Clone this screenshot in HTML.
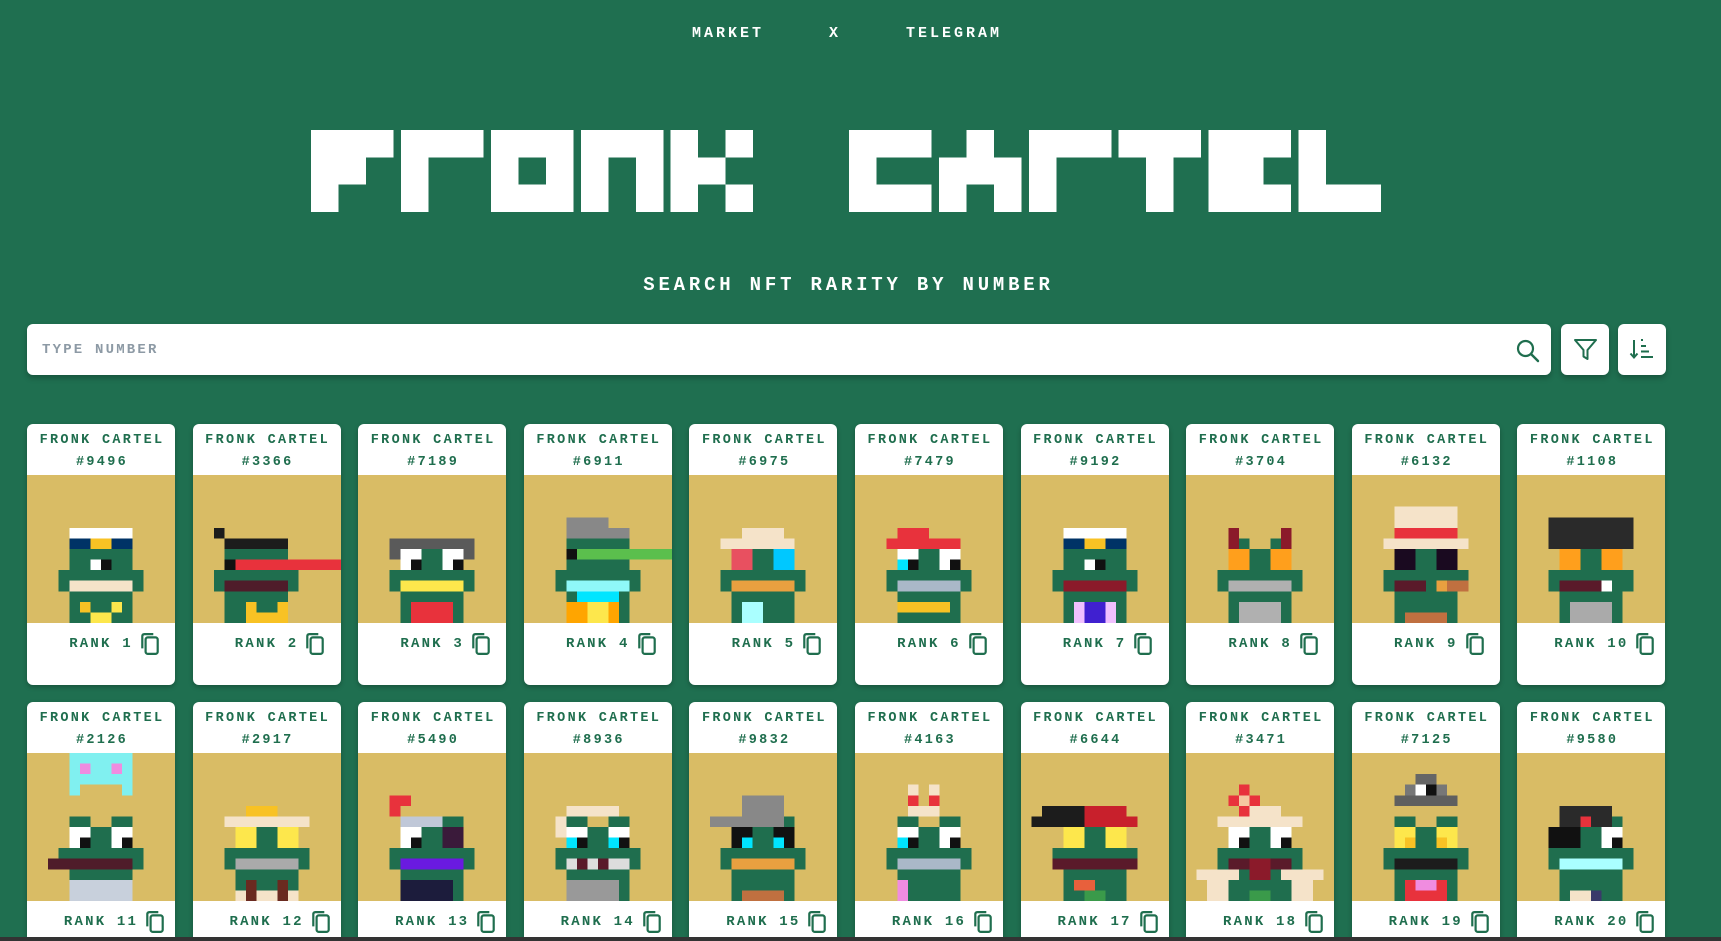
<!DOCTYPE html>
<html><head><meta charset="utf-8">
<style>
*{box-sizing:border-box;margin:0;padding:0}
html{width:1721px;height:941px;overflow:hidden}
body{width:1721px;height:941px;overflow:hidden;background:#1f6f50;font-family:"Liberation Mono","DejaVu Sans Mono",monospace;font-weight:bold;position:relative}
.nav{position:absolute;top:25px;left:0;width:1721px;height:20px;color:#fff;font-size:15px;letter-spacing:3px}
.nav span{position:absolute;top:0}
.title{position:absolute;left:0;top:0}
.sub{position:absolute;top:274px;left:0;width:1721px;text-align:center;color:#fff;font-size:19px;letter-spacing:3.8px;padding-right:24px}
.search{position:absolute;left:27px;top:324px;width:1524px;height:51px;background:#fff;border-radius:6px;box-shadow:0 3px 6px rgba(0,0,0,.25)}
.search .ph{position:absolute;left:15px;top:18px;font-size:14px;letter-spacing:2.2px;color:#8d9aa5;font-weight:bold}
.btn{position:absolute;top:324px;width:48px;height:51px;background:#fff;border-radius:6px;box-shadow:0 3px 6px rgba(0,0,0,.25)}
.grid{position:absolute;left:27px;top:424px;display:grid;grid-template-columns:repeat(10,148px);column-gap:17.6px;row-gap:17px}
.card{width:148px;height:261px;background:#fff;border-radius:6px;overflow:hidden;box-shadow:0 2px 5px rgba(0,0,0,.25);color:#1f6e4e}
.hd{height:51px;text-align:center;font-size:13.5px;letter-spacing:2.3px;line-height:22px;padding-top:6px;padding-left:2px}
.img{height:148px;background:#d9bc65;display:block}
.img svg{display:block}
.rk{height:40px;display:flex;align-items:center;justify-content:center;padding-left:26px;font-size:14px;letter-spacing:2.2px;padding-top:2px}
.rk svg{margin-left:8px;width:18px;height:22px}
.bar{position:absolute;left:0;top:937px;width:1721px;height:4px;background:#333}
</style></head><body>
<svg width="0" height="0" style="position:absolute">
<defs>
<g id="f">
<rect x="4" y="6" width="2" height="1" fill="#1f6e4e"/><rect x="8" y="6" width="2" height="1" fill="#1f6e4e"/>
<rect x="6" y="7" width="2" height="2" fill="#1f6e4e"/>
<rect x="4" y="7" width="2" height="2" fill="#fff"/><rect x="8" y="7" width="2" height="2" fill="#fff"/>
<rect x="5" y="8" width="1" height="1" fill="#111"/><rect x="9" y="8" width="1" height="1" fill="#111"/>
<rect x="3" y="9" width="8" height="2" fill="#1f6e4e"/>
<rect x="4" y="11" width="6" height="3" fill="#1f6e4e"/>
</g>
</defs></svg>

<div class="nav"><span style="left:692px">MARKET</span><span style="left:829px">X</span><span style="left:906px">TELEGRAM</span></div>

<svg class="title" width="1721" height="240" shape-rendering="crispEdges">
<g fill="#fff" transform="translate(311,130) scale(27.5,27.3)">
<g><rect x="0" y="0" width="3" height="1"/><rect x="0" y="1" width="2" height="1"/><rect x="0" y="2" width="1" height="1"/></g>
<g transform="translate(3.27,0)"><rect x="0" y="0" width="3" height="1"/><rect x="0" y="1" width="1" height="2"/></g>
<g transform="translate(6.54,0)"><rect x="0" y="0" width="3" height="1"/><rect x="0" y="2" width="3" height="1"/><rect x="0" y="1" width="1" height="1"/><rect x="2" y="1" width="1" height="1"/></g>
<g transform="translate(9.81,0)"><rect x="0" y="0" width="3" height="1"/><rect x="0" y="1" width="1" height="2"/><rect x="2" y="1" width="1" height="2"/></g>
<g transform="translate(13.08,0)"><rect x="0" y="0" width="1" height="3"/><rect x="1" y="1" width="1" height="1"/><rect x="2" y="0" width="1" height="1"/><rect x="2" y="2" width="1" height="1"/></g>
<g transform="translate(19.56,0)"><rect x="0" y="0" width="3" height="1"/><rect x="0" y="2" width="3" height="1"/><rect x="0" y="1" width="1" height="1"/></g>
<g transform="translate(22.83,0)"><rect x="1" y="0" width="1" height="1"/><rect x="0" y="1" width="3" height="1"/><rect x="0" y="2" width="1" height="1"/><rect x="2" y="2" width="1" height="1"/></g>
<g transform="translate(26.1,0)"><rect x="0" y="0" width="3" height="1"/><rect x="0" y="1" width="1" height="2"/></g>
<g transform="translate(29.37,0)"><rect x="0" y="0" width="3" height="1"/><rect x="1" y="1" width="1" height="2"/></g>
<g transform="translate(32.64,0)"><rect x="0" y="0" width="3" height="1"/><rect x="0" y="1" width="2" height="1"/><rect x="0" y="2" width="3" height="1"/></g>
<g transform="translate(35.91,0)"><rect x="0" y="0" width="1" height="2"/><rect x="0" y="2" width="3" height="1"/></g>
</g></svg>

<div class="sub">SEARCH NFT RARITY BY NUMBER</div>

<div class="search"><div class="ph">TYPE NUMBER</div>
<svg style="position:absolute;left:1488px;top:14px" width="26" height="26" viewBox="0 0 26 26"><circle cx="10.5" cy="10.5" r="7.5" fill="none" stroke="#1f6e4e" stroke-width="2.2"/><path d="M16 16 L23 23" stroke="#1f6e4e" stroke-width="2.4" stroke-linecap="round"/></svg>
</div>
<div class="btn" style="left:1561px"><svg style="position:absolute;left:12px;top:13px" width="25" height="25" viewBox="0 0 25 25"><path d="M2 3 H23 L14.5 13 V22 L10.5 19.5 V13 Z" fill="none" stroke="#1f6e4e" stroke-width="2" stroke-linejoin="round"/></svg></div>
<div class="btn" style="left:1618px"><svg style="position:absolute;left:11px;top:13px" width="26" height="26" viewBox="0 0 26 26"><path d="M5 3 V20 M1.5 16.5 L5 20.5 L8.5 16.5" fill="none" stroke="#1f6e4e" stroke-width="2"/><path d="M12 3 H14 M12 9 H17 M12 14.5 H20 M12 20 H24" stroke="#1f6e4e" stroke-width="2"/></svg></div>

<div class="grid">
<div class="card"><div class="hd">FRONK CARTEL<br>#9496</div><div class="img"><svg width="148" height="148" viewBox="0 0 14 14" preserveAspectRatio="none" shape-rendering="crispEdges"><use href="#f"/><rect x="4" y="5" width="6" height="1" fill="#fff"/><rect x="4" y="6" width="6" height="1" fill="#003366"/><rect x="6" y="6" width="2" height="1" fill="#f8c224"/><rect x="4" y="7" width="6" height="2" fill="#1f6e4e"/><rect x="6" y="8" width="1" height="1" fill="#fff"/><rect x="7" y="8" width="1" height="1" fill="#111"/><rect x="4" y="10" width="6" height="1" fill="#f5e3c9"/><rect x="5" y="12" width="1" height="1" fill="#f8c224"/><rect x="8" y="12" width="1" height="1" fill="#fde74c"/><rect x="6" y="13" width="2" height="1" fill="#fde74c"/></svg></div><div class="rk">RANK 1<svg viewBox="0 0 16 20"><path d="M1 14 V3 Q1 1 3 1 H11" fill="none" stroke="#1f6e4e" stroke-width="2"/><rect x="4" y="4" width="11" height="15" rx="2" fill="none" stroke="#1f6e4e" stroke-width="2"/></svg></div></div>

<div class="card"><div class="hd">FRONK CARTEL<br>#3366</div><div class="img"><svg width="148" height="148" viewBox="0 0 14 14" preserveAspectRatio="none" shape-rendering="crispEdges"><use href="#f" x="-1"/><rect x="2" y="5" width="1" height="1" fill="#1c1c1c"/><rect x="3" y="6" width="6" height="1" fill="#1c1c1c"/><rect x="3" y="7" width="6" height="1" fill="#1f6e4e"/><rect x="3" y="8" width="1" height="1" fill="#111"/><rect x="4" y="8" width="10" height="1" fill="#e8323c"/><rect x="3" y="10" width="6" height="1" fill="#4f1c2a"/><rect x="5" y="12" width="4" height="2" fill="#f8c224"/><rect x="6" y="12" width="2" height="1" fill="#1f6e4e"/></svg></div><div class="rk">RANK 2<svg viewBox="0 0 16 20"><path d="M1 14 V3 Q1 1 3 1 H11" fill="none" stroke="#1f6e4e" stroke-width="2"/><rect x="4" y="4" width="11" height="15" rx="2" fill="none" stroke="#1f6e4e" stroke-width="2"/></svg></div></div>

<div class="card"><div class="hd">FRONK CARTEL<br>#7189</div><div class="img"><svg width="148" height="148" viewBox="0 0 14 14" preserveAspectRatio="none" shape-rendering="crispEdges"><use href="#f"/><rect x="4" y="6" width="6" height="1" fill="#5a5a5a"/><rect x="3" y="6" width="1" height="2" fill="#5a5a5a"/><rect x="10" y="6" width="1" height="2" fill="#5a5a5a"/><rect x="4" y="10" width="6" height="1" fill="#fde74c"/><rect x="5" y="12" width="4" height="2" fill="#e8323c"/></svg></div><div class="rk">RANK 3<svg viewBox="0 0 16 20"><path d="M1 14 V3 Q1 1 3 1 H11" fill="none" stroke="#1f6e4e" stroke-width="2"/><rect x="4" y="4" width="11" height="15" rx="2" fill="none" stroke="#1f6e4e" stroke-width="2"/></svg></div></div>

<div class="card"><div class="hd">FRONK CARTEL<br>#6911</div><div class="img"><svg width="148" height="148" viewBox="0 0 14 14" preserveAspectRatio="none" shape-rendering="crispEdges"><use href="#f"/><rect x="4" y="4" width="4" height="2" fill="#888"/><rect x="8" y="5" width="2" height="1" fill="#888"/><rect x="4" y="6" width="6" height="1" fill="#1f6e4e"/><rect x="4" y="7" width="1" height="1" fill="#111"/><rect x="5" y="7" width="9" height="1" fill="#5bbf4d"/><rect x="4" y="8" width="6" height="1" fill="#1f6e4e"/><rect x="3" y="9" width="8" height="1" fill="#1f6e4e"/><rect x="4" y="10" width="6" height="1" fill="#8ff8f8"/><rect x="5" y="11" width="4" height="1" fill="#00e5ff"/><rect x="4" y="12" width="5" height="2" fill="#ffa500"/><rect x="6" y="12" width="2" height="2" fill="#fde74c"/></svg></div><div class="rk">RANK 4<svg viewBox="0 0 16 20"><path d="M1 14 V3 Q1 1 3 1 H11" fill="none" stroke="#1f6e4e" stroke-width="2"/><rect x="4" y="4" width="11" height="15" rx="2" fill="none" stroke="#1f6e4e" stroke-width="2"/></svg></div></div>

<div class="card"><div class="hd">FRONK CARTEL<br>#6975</div><div class="img"><svg width="148" height="148" viewBox="0 0 14 14" preserveAspectRatio="none" shape-rendering="crispEdges"><use href="#f"/><rect x="5" y="5" width="4" height="1" fill="#f5e3c9"/><rect x="3" y="6" width="7" height="1" fill="#f5e3c9"/><rect x="4" y="7" width="2" height="2" fill="#e85060"/><rect x="8" y="7" width="2" height="2" fill="#00c8ff"/><rect x="4" y="10" width="6" height="1" fill="#e8a040"/><rect x="5" y="12" width="2" height="2" fill="#aaffff"/></svg></div><div class="rk">RANK 5<svg viewBox="0 0 16 20"><path d="M1 14 V3 Q1 1 3 1 H11" fill="none" stroke="#1f6e4e" stroke-width="2"/><rect x="4" y="4" width="11" height="15" rx="2" fill="none" stroke="#1f6e4e" stroke-width="2"/></svg></div></div>

<div class="card"><div class="hd">FRONK CARTEL<br>#7479</div><div class="img"><svg width="148" height="148" viewBox="0 0 14 14" preserveAspectRatio="none" shape-rendering="crispEdges"><use href="#f"/><rect x="4" y="5" width="3" height="1" fill="#e8323c"/><rect x="3" y="6" width="7" height="1" fill="#e8323c"/><rect x="4" y="8" width="1" height="1" fill="#00e5ff"/><rect x="4" y="10" width="6" height="1" fill="#aab8c8"/><rect x="4" y="12" width="5" height="1" fill="#f8c224"/></svg></div><div class="rk">RANK 6<svg viewBox="0 0 16 20"><path d="M1 14 V3 Q1 1 3 1 H11" fill="none" stroke="#1f6e4e" stroke-width="2"/><rect x="4" y="4" width="11" height="15" rx="2" fill="none" stroke="#1f6e4e" stroke-width="2"/></svg></div></div>

<div class="card"><div class="hd">FRONK CARTEL<br>#9192</div><div class="img"><svg width="148" height="148" viewBox="0 0 14 14" preserveAspectRatio="none" shape-rendering="crispEdges"><use href="#f"/><rect x="4" y="5" width="6" height="1" fill="#fff"/><rect x="4" y="6" width="6" height="1" fill="#003366"/><rect x="6" y="6" width="2" height="1" fill="#f8c224"/><rect x="4" y="7" width="6" height="2" fill="#1f6e4e"/><rect x="6" y="8" width="1" height="1" fill="#fff"/><rect x="7" y="8" width="1" height="1" fill="#111"/><rect x="4" y="10" width="6" height="1" fill="#8b1a2a"/><rect x="5" y="12" width="1" height="2" fill="#f0c0ff"/><rect x="6" y="12" width="2" height="2" fill="#4020d0"/><rect x="8" y="12" width="1" height="2" fill="#f0c0ff"/></svg></div><div class="rk">RANK 7<svg viewBox="0 0 16 20"><path d="M1 14 V3 Q1 1 3 1 H11" fill="none" stroke="#1f6e4e" stroke-width="2"/><rect x="4" y="4" width="11" height="15" rx="2" fill="none" stroke="#1f6e4e" stroke-width="2"/></svg></div></div>

<div class="card"><div class="hd">FRONK CARTEL<br>#3704</div><div class="img"><svg width="148" height="148" viewBox="0 0 14 14" preserveAspectRatio="none" shape-rendering="crispEdges"><use href="#f"/><rect x="4" y="5" width="1" height="2" fill="#8b1a2a"/><rect x="9" y="5" width="1" height="2" fill="#8b1a2a"/><rect x="4" y="7" width="2" height="2" fill="#ff9f1c"/><rect x="8" y="7" width="2" height="2" fill="#ff9f1c"/><rect x="4" y="10" width="6" height="1" fill="#b0b0b0"/><rect x="5" y="12" width="4" height="2" fill="#b0b0b0"/></svg></div><div class="rk">RANK 8<svg viewBox="0 0 16 20"><path d="M1 14 V3 Q1 1 3 1 H11" fill="none" stroke="#1f6e4e" stroke-width="2"/><rect x="4" y="4" width="11" height="15" rx="2" fill="none" stroke="#1f6e4e" stroke-width="2"/></svg></div></div>

<div class="card"><div class="hd">FRONK CARTEL<br>#6132</div><div class="img"><svg width="148" height="148" viewBox="0 0 14 14" preserveAspectRatio="none" shape-rendering="crispEdges"><use href="#f"/><rect x="4" y="3" width="6" height="2" fill="#f5e3c9"/><rect x="4" y="5" width="6" height="1" fill="#e8323c"/><rect x="3" y="6" width="8" height="1" fill="#f5e3c9"/><rect x="4" y="7" width="2" height="2" fill="#1a0a20"/><rect x="8" y="7" width="2" height="2" fill="#1a0a20"/><rect x="4" y="10" width="3" height="1" fill="#5a1a2a"/><rect x="8" y="10" width="1" height="1" fill="#e8a040"/><rect x="9" y="10" width="2" height="1" fill="#c07040"/><rect x="5" y="13" width="4" height="1" fill="#c07040"/></svg></div><div class="rk">RANK 9<svg viewBox="0 0 16 20"><path d="M1 14 V3 Q1 1 3 1 H11" fill="none" stroke="#1f6e4e" stroke-width="2"/><rect x="4" y="4" width="11" height="15" rx="2" fill="none" stroke="#1f6e4e" stroke-width="2"/></svg></div></div>

<div class="card"><div class="hd">FRONK CARTEL<br>#1108</div><div class="img"><svg width="148" height="148" viewBox="0 0 14 14" preserveAspectRatio="none" shape-rendering="crispEdges"><use href="#f"/><rect x="3" y="4" width="8" height="3" fill="#2a2a2a"/><rect x="4" y="7" width="2" height="2" fill="#ff9f1c"/><rect x="8" y="7" width="2" height="2" fill="#ff9f1c"/><rect x="4" y="10" width="4" height="1" fill="#5a1a2a"/><rect x="8" y="10" width="1" height="1" fill="#fff"/><rect x="5" y="12" width="4" height="2" fill="#aaa"/></svg></div><div class="rk">RANK 10<svg viewBox="0 0 16 20"><path d="M1 14 V3 Q1 1 3 1 H11" fill="none" stroke="#1f6e4e" stroke-width="2"/><rect x="4" y="4" width="11" height="15" rx="2" fill="none" stroke="#1f6e4e" stroke-width="2"/></svg></div></div>

<div class="card"><div class="hd">FRONK CARTEL<br>#2126</div><div class="img"><svg width="148" height="148" viewBox="0 0 14 14" preserveAspectRatio="none" shape-rendering="crispEdges"><use href="#f"/><rect x="4" y="0" width="6" height="3" fill="#80f0f0"/><rect x="5" y="1" width="1" height="1" fill="#f08ce0"/><rect x="8" y="1" width="1" height="1" fill="#f08ce0"/><rect x="4" y="3" width="1" height="1" fill="#80f0f0"/><rect x="9" y="3" width="1" height="1" fill="#80f0f0"/><rect x="2" y="10" width="8" height="1" fill="#4f1c2a"/><rect x="4" y="12" width="6" height="2" fill="#c8d0dc"/></svg></div><div class="rk">RANK 11<svg viewBox="0 0 16 20"><path d="M1 14 V3 Q1 1 3 1 H11" fill="none" stroke="#1f6e4e" stroke-width="2"/><rect x="4" y="4" width="11" height="15" rx="2" fill="none" stroke="#1f6e4e" stroke-width="2"/></svg></div></div>

<div class="card"><div class="hd">FRONK CARTEL<br>#2917</div><div class="img"><svg width="148" height="148" viewBox="0 0 14 14" preserveAspectRatio="none" shape-rendering="crispEdges"><use href="#f"/><rect x="5" y="5" width="3" height="1" fill="#f8c224"/><rect x="3" y="6" width="8" height="1" fill="#f5e3c9"/><rect x="4" y="7" width="2" height="2" fill="#fde74c"/><rect x="8" y="7" width="2" height="2" fill="#fde74c"/><rect x="4" y="10" width="6" height="1" fill="#aaa"/><rect x="4" y="13" width="6" height="1" fill="#f5e3c9"/><rect x="5" y="12" width="1" height="2" fill="#6a2a20"/><rect x="8" y="12" width="1" height="2" fill="#6a2a20"/></svg></div><div class="rk">RANK 12<svg viewBox="0 0 16 20"><path d="M1 14 V3 Q1 1 3 1 H11" fill="none" stroke="#1f6e4e" stroke-width="2"/><rect x="4" y="4" width="11" height="15" rx="2" fill="none" stroke="#1f6e4e" stroke-width="2"/></svg></div></div>

<div class="card"><div class="hd">FRONK CARTEL<br>#5490</div><div class="img"><svg width="148" height="148" viewBox="0 0 14 14" preserveAspectRatio="none" shape-rendering="crispEdges"><use href="#f"/><rect x="3" y="4" width="2" height="1" fill="#e8323c"/><rect x="3" y="5" width="1" height="1" fill="#e8323c"/><rect x="4" y="6" width="4" height="1" fill="#c0c8d8"/><rect x="8" y="7" width="2" height="2" fill="#3a1a3a"/><rect x="4" y="10" width="6" height="1" fill="#6a1ae0"/><rect x="4" y="12" width="5" height="2" fill="#1c1c3c"/></svg></div><div class="rk">RANK 13<svg viewBox="0 0 16 20"><path d="M1 14 V3 Q1 1 3 1 H11" fill="none" stroke="#1f6e4e" stroke-width="2"/><rect x="4" y="4" width="11" height="15" rx="2" fill="none" stroke="#1f6e4e" stroke-width="2"/></svg></div></div>

<div class="card"><div class="hd">FRONK CARTEL<br>#8936</div><div class="img"><svg width="148" height="148" viewBox="0 0 14 14" preserveAspectRatio="none" shape-rendering="crispEdges"><use href="#f"/><rect x="4" y="5" width="5" height="1" fill="#f5e3c9"/><rect x="3" y="6" width="1" height="2" fill="#f5e3c9"/><rect x="4" y="8" width="1" height="1" fill="#00e5ff"/><rect x="8" y="8" width="1" height="1" fill="#00e5ff"/><rect x="4" y="10" width="6" height="1" fill="#ddd"/><rect x="5" y="10" width="1" height="1" fill="#5a1a2a"/><rect x="7" y="10" width="1" height="1" fill="#5a1a2a"/><rect x="4" y="12" width="5" height="2" fill="#999"/></svg></div><div class="rk">RANK 14<svg viewBox="0 0 16 20"><path d="M1 14 V3 Q1 1 3 1 H11" fill="none" stroke="#1f6e4e" stroke-width="2"/><rect x="4" y="4" width="11" height="15" rx="2" fill="none" stroke="#1f6e4e" stroke-width="2"/></svg></div></div>

<div class="card"><div class="hd">FRONK CARTEL<br>#9832</div><div class="img"><svg width="148" height="148" viewBox="0 0 14 14" preserveAspectRatio="none" shape-rendering="crispEdges"><use href="#f"/><rect x="5" y="4" width="4" height="3" fill="#888"/><rect x="2" y="6" width="3" height="1" fill="#888"/><rect x="4" y="7" width="2" height="2" fill="#111"/><rect x="8" y="7" width="2" height="2" fill="#111"/><rect x="5" y="8" width="1" height="1" fill="#00e5ff"/><rect x="8" y="8" width="1" height="1" fill="#00e5ff"/><rect x="4" y="10" width="6" height="1" fill="#e8a040"/><rect x="5" y="13" width="4" height="1" fill="#c07040"/></svg></div><div class="rk">RANK 15<svg viewBox="0 0 16 20"><path d="M1 14 V3 Q1 1 3 1 H11" fill="none" stroke="#1f6e4e" stroke-width="2"/><rect x="4" y="4" width="11" height="15" rx="2" fill="none" stroke="#1f6e4e" stroke-width="2"/></svg></div></div>

<div class="card"><div class="hd">FRONK CARTEL<br>#4163</div><div class="img"><svg width="148" height="148" viewBox="0 0 14 14" preserveAspectRatio="none" shape-rendering="crispEdges"><use href="#f"/><rect x="5" y="3" width="1" height="2" fill="#f5e3c9"/><rect x="7" y="3" width="1" height="2" fill="#f5e3c9"/><rect x="5" y="4" width="1" height="1" fill="#e8323c"/><rect x="7" y="4" width="1" height="1" fill="#e8323c"/><rect x="5" y="5" width="3" height="1" fill="#f5e3c9"/><rect x="4" y="8" width="1" height="1" fill="#00e5ff"/><rect x="4" y="10" width="6" height="1" fill="#aab8c8"/><rect x="4" y="12" width="1" height="2" fill="#f08ce0"/></svg></div><div class="rk">RANK 16<svg viewBox="0 0 16 20"><path d="M1 14 V3 Q1 1 3 1 H11" fill="none" stroke="#1f6e4e" stroke-width="2"/><rect x="4" y="4" width="11" height="15" rx="2" fill="none" stroke="#1f6e4e" stroke-width="2"/></svg></div></div>

<div class="card"><div class="hd">FRONK CARTEL<br>#6644</div><div class="img"><svg width="148" height="148" viewBox="0 0 14 14" preserveAspectRatio="none" shape-rendering="crispEdges"><use href="#f"/><rect x="2" y="5" width="4" height="2" fill="#1c1c1c"/><rect x="6" y="5" width="4" height="2" fill="#c8202c"/><rect x="1" y="6" width="1" height="1" fill="#1c1c1c"/><rect x="10" y="6" width="1" height="1" fill="#c8202c"/><rect x="4" y="7" width="2" height="2" fill="#fde74c"/><rect x="8" y="7" width="2" height="2" fill="#fde74c"/><rect x="3" y="10" width="8" height="1" fill="#5a1a2a"/><rect x="5" y="12" width="2" height="1" fill="#e8603c"/><rect x="6" y="13" width="2" height="1" fill="#3a9a4a"/></svg></div><div class="rk">RANK 17<svg viewBox="0 0 16 20"><path d="M1 14 V3 Q1 1 3 1 H11" fill="none" stroke="#1f6e4e" stroke-width="2"/><rect x="4" y="4" width="11" height="15" rx="2" fill="none" stroke="#1f6e4e" stroke-width="2"/></svg></div></div>

<div class="card"><div class="hd">FRONK CARTEL<br>#3471</div><div class="img"><svg width="148" height="148" viewBox="0 0 14 14" preserveAspectRatio="none" shape-rendering="crispEdges"><use href="#f"/><rect x="5" y="3" width="1" height="1" fill="#e8323c"/><rect x="4" y="4" width="3" height="1" fill="#e8323c"/><rect x="5" y="4" width="1" height="1" fill="#f5c8a0"/><rect x="5" y="5" width="1" height="1" fill="#e8323c"/><rect x="6" y="5" width="3" height="1" fill="#f5e3c9"/><rect x="3" y="6" width="8" height="1" fill="#f5e3c9"/><rect x="4" y="10" width="6" height="1" fill="#5a1a2a"/><rect x="6" y="10" width="2" height="2" fill="#8b1a2a"/><rect x="1" y="11" width="4" height="1" fill="#f5e3c9"/><rect x="9" y="11" width="4" height="1" fill="#f5e3c9"/><rect x="2" y="12" width="2" height="2" fill="#f5e3c9"/><rect x="10" y="12" width="2" height="2" fill="#f5e3c9"/><rect x="6" y="13" width="2" height="1" fill="#3a9a4a"/></svg></div><div class="rk">RANK 18<svg viewBox="0 0 16 20"><path d="M1 14 V3 Q1 1 3 1 H11" fill="none" stroke="#1f6e4e" stroke-width="2"/><rect x="4" y="4" width="11" height="15" rx="2" fill="none" stroke="#1f6e4e" stroke-width="2"/></svg></div></div>

<div class="card"><div class="hd">FRONK CARTEL<br>#7125</div><div class="img"><svg width="148" height="148" viewBox="0 0 14 14" preserveAspectRatio="none" shape-rendering="crispEdges"><use href="#f"/><rect x="6" y="2" width="2" height="1" fill="#666"/><rect x="5" y="3" width="4" height="1" fill="#777"/><rect x="6" y="3" width="1" height="1" fill="#fff"/><rect x="7" y="3" width="1" height="1" fill="#111"/><rect x="4" y="4" width="6" height="1" fill="#5f5f5f"/><rect x="4" y="7" width="2" height="2" fill="#fde74c"/><rect x="8" y="7" width="2" height="2" fill="#fde74c"/><rect x="5" y="8" width="1" height="1" fill="#f8c224"/><rect x="8" y="8" width="1" height="1" fill="#f8c224"/><rect x="4" y="10" width="6" height="1" fill="#1c1c1c"/><rect x="5" y="12" width="4" height="2" fill="#e8323c"/><rect x="6" y="12" width="2" height="1" fill="#f08ce0"/></svg></div><div class="rk">RANK 19<svg viewBox="0 0 16 20"><path d="M1 14 V3 Q1 1 3 1 H11" fill="none" stroke="#1f6e4e" stroke-width="2"/><rect x="4" y="4" width="11" height="15" rx="2" fill="none" stroke="#1f6e4e" stroke-width="2"/></svg></div></div>

<div class="card"><div class="hd">FRONK CARTEL<br>#9580</div><div class="img"><svg width="148" height="148" viewBox="0 0 14 14" preserveAspectRatio="none" shape-rendering="crispEdges"><use href="#f"/><rect x="4" y="5" width="5" height="2" fill="#2a2a2a"/><rect x="6" y="6" width="1" height="1" fill="#e8323c"/><rect x="3" y="7" width="3" height="2" fill="#111"/><rect x="4" y="10" width="6" height="1" fill="#aaffff"/><rect x="5" y="13" width="2" height="1" fill="#f5e3c9"/><rect x="7" y="13" width="1" height="1" fill="#3a3a6a"/></svg></div><div class="rk">RANK 20<svg viewBox="0 0 16 20"><path d="M1 14 V3 Q1 1 3 1 H11" fill="none" stroke="#1f6e4e" stroke-width="2"/><rect x="4" y="4" width="11" height="15" rx="2" fill="none" stroke="#1f6e4e" stroke-width="2"/></svg></div></div>
</div>
<div class="bar"></div>
</body></html>
